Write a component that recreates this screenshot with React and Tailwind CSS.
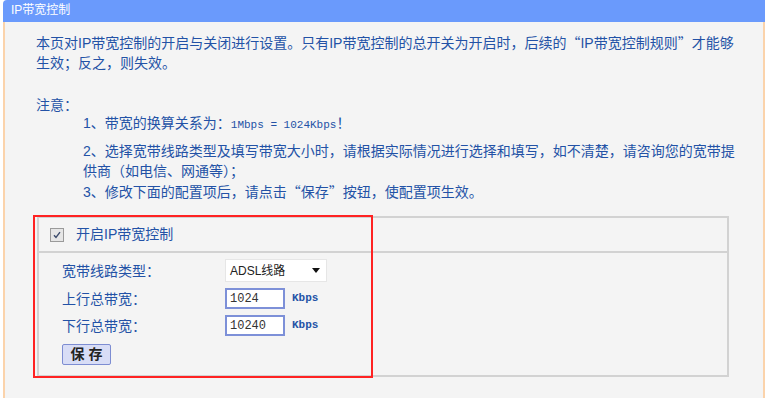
const font = "font-['Liberation_Sans','Noto_Sans_CJK_SC',sans-serif]";
const cjk = "font-['Noto_Sans_CJK_SC',sans-serif]";

const Row = ({ label, children }) => (
  <div className="flex items-center">
    <span className="w-[163px] text-[14px] leading-[20px] text-[#2352a6]">{label}</span>
    {children}
  </div>
);

const NumInput = ({ value }) => (
  <div className="flex items-center">
    <div className="w-[60px] h-[21px] border-2 border-[#7d90d8] bg-white pl-[3px] flex items-center text-[12px] text-[#333] font-['Liberation_Mono',monospace]">
      {value}
    </div>
    <span className="ml-[7px] text-[11px] font-bold text-[#2352a6] font-['Liberation_Mono',monospace]">Kbps</span>
  </div>
);

export default function App() {
  return (
    <div className={`w-[779px] h-[398px] bg-white overflow-hidden ${font}`}>
      <div className="ml-[3px] w-[762px] h-full flex flex-col">
        {/* 标题栏 */}
        <div className="h-[22px] bg-[#6a9afc] rounded-tl-[4px] pl-[8px] text-[12px] leading-[21px] text-white">
          IP带宽控制
        </div>

        <div className="flex-1 bg-[#f4f4f4] border-x-2 border-[#fbd3ab] pl-[31px] pt-[10px] text-[14px] text-[#2352a6]">
          <p className="leading-[20px] whitespace-nowrap">
            本页对IP带宽控制的开启与关闭进行设置。只有IP带宽控制的总开关为开启时，后续的<span className={cjk}>“</span>IP带宽控制规则<span className={cjk}>”</span>才能够
            <br />
            生效；反之，则失效。
          </p>

          <p className="mt-[23px] leading-[18px]">注意：</p>
          <div className="pl-[47px] whitespace-nowrap">
            <p className="leading-[18px]">
              1、带宽的换算关系为：<span className="font-['Liberation_Mono',monospace] text-[11px]">1Mbps = 1024Kbps</span>！
            </p>
            <p className="mt-[7px] leading-[20px]">
              2、选择宽带线路类型及填写带宽大小时，请根据实际情况进行选择和填写，如不清楚，请咨询您的宽带提
              <br />
              供商（如电信、网通等）；
            </p>
            <p className="leading-[20px]">
              3、修改下面的配置项后，请点击<span className={cjk}>“</span>保存<span className={cjk}>”</span>按钮，使配置项生效。
            </p>
          </div>

          {/* 设置区域 */}
          <div className="relative ml-[1px] mt-[14px] w-[692px] h-[161px] border-2 border-[#d2d2d2] flex flex-col">
            <div className="h-[35px] flex items-center pl-[11px] border-b-2 border-[#d2d2d2]">
              <div className="w-[14px] h-[14px] border border-[#9a9a9a] bg-[#e6e6e6] flex items-center justify-center">
                <svg width="10" height="10" viewBox="0 0 10 10">
                  <path d="M2 5.2 L4 7.5 L8 2.2" fill="none" stroke="#3b4a6b" strokeWidth="1.4" />
                </svg>
              </div>
              <span className="ml-[12px] text-[14px] text-[#2352a6]">开启IP带宽控制</span>
            </div>

            <div className="pl-[23px] pt-[6px] flex flex-col gap-[6px]">
              <Row label="宽带线路类型：">
                <div className="w-[102px] h-[23px] bg-white border border-[#e6e6e6] flex items-center justify-between pl-[4px] pr-[6px]">
                  <span className="text-[12px] text-[#222]">ADSL线路</span>
                  <svg width="8" height="5" viewBox="0 0 8 5">
                    <path d="M0 0 H8 L4 5 Z" fill="#111" />
                  </svg>
                </div>
              </Row>
              <Row label="上行总带宽：">
                <NumInput value="1024" />
              </Row>
              <Row label="下行总带宽：">
                <NumInput value="10240" />
              </Row>
              <button className="mt-[2px] w-[49px] h-[21px] bg-[#d8ddf6] border border-[#7d8dd2] rounded-[2px] text-[14px] leading-[19px] text-[#222] font-bold">
                保 存
              </button>
            </div>

            {/* 红色标注框 */}
            <div className="absolute left-[-6px] top-[-3px] w-[340px] h-[163px] border-2 border-[#ff2222]" />
          </div>
        </div>
      </div>
    </div>
  );
}
